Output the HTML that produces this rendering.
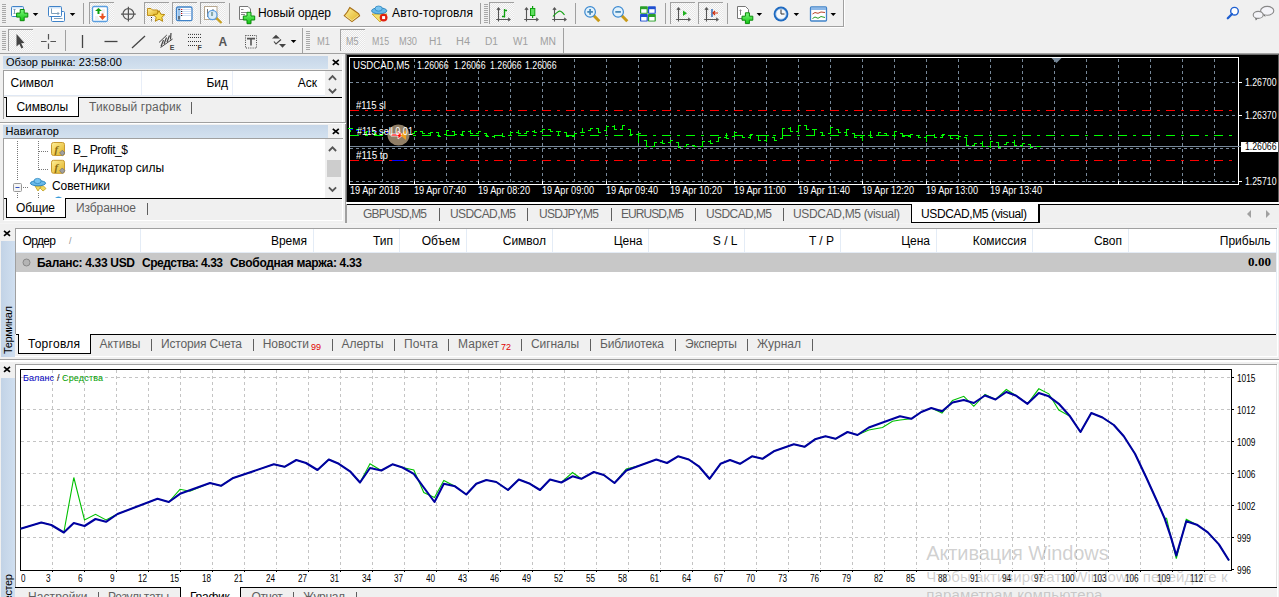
<!DOCTYPE html><html><head><meta charset="utf-8"><style>
html,body{margin:0;padding:0;width:1279px;height:597px;overflow:hidden;background:#f0f0f0;font-family:"Liberation Sans",sans-serif;}
.t{position:absolute;white-space:pre;line-height:1;}
svg{position:absolute;overflow:visible}
</style></head><body>
<div style="position:absolute;left:0px;top:26px;width:844px;height:1px;background:#a0a0a0"></div>
<div style="position:absolute;left:0px;top:27px;width:844px;height:1px;background:#ffffff"></div>
<div style="position:absolute;left:0px;top:53px;width:346px;height:1px;background:#a0a0a0"></div>
<div style="position:absolute;left:346px;top:53px;width:933px;height:1px;background:#a0a0a0"></div>
<div style="position:absolute;left:2px;top:4px;width:4px;height:1px;background:#a8a8a8"></div>
<div style="position:absolute;left:2px;top:6px;width:4px;height:1px;background:#a8a8a8"></div>
<div style="position:absolute;left:2px;top:8px;width:4px;height:1px;background:#a8a8a8"></div>
<div style="position:absolute;left:2px;top:10px;width:4px;height:1px;background:#a8a8a8"></div>
<div style="position:absolute;left:2px;top:12px;width:4px;height:1px;background:#a8a8a8"></div>
<div style="position:absolute;left:2px;top:14px;width:4px;height:1px;background:#a8a8a8"></div>
<div style="position:absolute;left:2px;top:16px;width:4px;height:1px;background:#a8a8a8"></div>
<div style="position:absolute;left:2px;top:18px;width:4px;height:1px;background:#a8a8a8"></div>
<div style="position:absolute;left:2px;top:20px;width:4px;height:1px;background:#a8a8a8"></div>
<div style="position:absolute;left:2px;top:22px;width:4px;height:1px;background:#a8a8a8"></div>
<div style="position:absolute;left:843px;top:0px;width:1px;height:26px;background:#a0a0a0"></div>
<div style="position:absolute;left:844px;top:0px;width:1px;height:26px;background:#ffffff"></div>
<div style="position:absolute;left:83px;top:3px;width:1px;height:21px;background:#a0a0a0"></div>
<div style="position:absolute;left:229px;top:3px;width:1px;height:21px;background:#a0a0a0"></div>
<div style="position:absolute;left:575px;top:3px;width:1px;height:21px;background:#a0a0a0"></div>
<div style="position:absolute;left:665px;top:3px;width:1px;height:21px;background:#a0a0a0"></div>
<div style="position:absolute;left:727px;top:3px;width:1px;height:21px;background:#a0a0a0"></div>
<div style="position:absolute;left:480px;top:3px;width:1px;height:21px;background:#a0a0a0"></div>
<div style="position:absolute;left:484px;top:4px;width:4px;height:1px;background:#a8a8a8"></div>
<div style="position:absolute;left:484px;top:6px;width:4px;height:1px;background:#a8a8a8"></div>
<div style="position:absolute;left:484px;top:8px;width:4px;height:1px;background:#a8a8a8"></div>
<div style="position:absolute;left:484px;top:10px;width:4px;height:1px;background:#a8a8a8"></div>
<div style="position:absolute;left:484px;top:12px;width:4px;height:1px;background:#a8a8a8"></div>
<div style="position:absolute;left:484px;top:14px;width:4px;height:1px;background:#a8a8a8"></div>
<div style="position:absolute;left:484px;top:16px;width:4px;height:1px;background:#a8a8a8"></div>
<div style="position:absolute;left:484px;top:18px;width:4px;height:1px;background:#a8a8a8"></div>
<div style="position:absolute;left:484px;top:20px;width:4px;height:1px;background:#a8a8a8"></div>
<div style="position:absolute;left:484px;top:22px;width:4px;height:1px;background:#a8a8a8"></div>
<div style="position:absolute;left:89px;top:2px;width:25px;height:22px;background:repeating-conic-gradient(#fbfbfb 0 25%,#e6e6e6 0 50%) 0 0/2px 2px;border-top:1px solid #a0a0a0;border-left:1px solid #a0a0a0;box-sizing:border-box"></div>
<div style="position:absolute;left:144px;top:2px;width:25px;height:22px;background:repeating-conic-gradient(#fbfbfb 0 25%,#e6e6e6 0 50%) 0 0/2px 2px;border-top:1px solid #a0a0a0;border-left:1px solid #a0a0a0;box-sizing:border-box"></div>
<div style="position:absolute;left:172px;top:2px;width:25px;height:22px;background:repeating-conic-gradient(#fbfbfb 0 25%,#e6e6e6 0 50%) 0 0/2px 2px;border-top:1px solid #a0a0a0;border-left:1px solid #a0a0a0;box-sizing:border-box"></div>
<div style="position:absolute;left:200px;top:2px;width:25px;height:22px;background:repeating-conic-gradient(#fbfbfb 0 25%,#e6e6e6 0 50%) 0 0/2px 2px;border-top:1px solid #a0a0a0;border-left:1px solid #a0a0a0;box-sizing:border-box"></div>
<div style="position:absolute;left:489px;top:2px;width:25px;height:22px;background:repeating-conic-gradient(#fbfbfb 0 25%,#e6e6e6 0 50%) 0 0/2px 2px;border-top:1px solid #a0a0a0;border-left:1px solid #a0a0a0;box-sizing:border-box"></div>
<div style="position:absolute;left:670px;top:2px;width:25px;height:22px;background:repeating-conic-gradient(#fbfbfb 0 25%,#e6e6e6 0 50%) 0 0/2px 2px;border-top:1px solid #a0a0a0;border-left:1px solid #a0a0a0;box-sizing:border-box"></div>
<div style="position:absolute;left:698px;top:2px;width:25px;height:22px;background:repeating-conic-gradient(#fbfbfb 0 25%,#e6e6e6 0 50%) 0 0/2px 2px;border-top:1px solid #a0a0a0;border-left:1px solid #a0a0a0;box-sizing:border-box"></div>
<div class="t" style="left:258.00px;top:7.14px;font-size:12px;color:#000;font-family:'Liberation Sans',sans-serif;letter-spacing:-0.078px;">Новый ордер</div>
<div class="t" style="left:392.00px;top:7.14px;font-size:12px;color:#000;font-family:'Liberation Sans',sans-serif;letter-spacing:0.148px;">Авто-торговля</div>
<div style="position:absolute;left:2px;top:31px;width:4px;height:1px;background:#a8a8a8"></div>
<div style="position:absolute;left:2px;top:33px;width:4px;height:1px;background:#a8a8a8"></div>
<div style="position:absolute;left:2px;top:35px;width:4px;height:1px;background:#a8a8a8"></div>
<div style="position:absolute;left:2px;top:37px;width:4px;height:1px;background:#a8a8a8"></div>
<div style="position:absolute;left:2px;top:39px;width:4px;height:1px;background:#a8a8a8"></div>
<div style="position:absolute;left:2px;top:41px;width:4px;height:1px;background:#a8a8a8"></div>
<div style="position:absolute;left:2px;top:43px;width:4px;height:1px;background:#a8a8a8"></div>
<div style="position:absolute;left:2px;top:45px;width:4px;height:1px;background:#a8a8a8"></div>
<div style="position:absolute;left:2px;top:47px;width:4px;height:1px;background:#a8a8a8"></div>
<div style="position:absolute;left:2px;top:49px;width:4px;height:1px;background:#a8a8a8"></div>
<div style="position:absolute;left:8px;top:29px;width:25px;height:22px;background:repeating-conic-gradient(#fbfbfb 0 25%,#e6e6e6 0 50%) 0 0/2px 2px;border-top:1px solid #a0a0a0;border-left:1px solid #a0a0a0;box-sizing:border-box"></div>
<div style="position:absolute;left:65px;top:30px;width:1px;height:21px;background:#a0a0a0"></div>
<div style="position:absolute;left:302px;top:28px;width:1px;height:25px;background:#a0a0a0"></div>
<div style="position:absolute;left:306px;top:31px;width:4px;height:1px;background:#a8a8a8"></div>
<div style="position:absolute;left:306px;top:33px;width:4px;height:1px;background:#a8a8a8"></div>
<div style="position:absolute;left:306px;top:35px;width:4px;height:1px;background:#a8a8a8"></div>
<div style="position:absolute;left:306px;top:37px;width:4px;height:1px;background:#a8a8a8"></div>
<div style="position:absolute;left:306px;top:39px;width:4px;height:1px;background:#a8a8a8"></div>
<div style="position:absolute;left:306px;top:41px;width:4px;height:1px;background:#a8a8a8"></div>
<div style="position:absolute;left:306px;top:43px;width:4px;height:1px;background:#a8a8a8"></div>
<div style="position:absolute;left:306px;top:45px;width:4px;height:1px;background:#a8a8a8"></div>
<div style="position:absolute;left:306px;top:47px;width:4px;height:1px;background:#a8a8a8"></div>
<div style="position:absolute;left:306px;top:49px;width:4px;height:1px;background:#a8a8a8"></div>
<div style="position:absolute;left:340px;top:29px;width:25px;height:22px;background:repeating-conic-gradient(#fbfbfb 0 25%,#e6e6e6 0 50%) 0 0/2px 2px;border-top:1px solid #a0a0a0;border-left:1px solid #a0a0a0;box-sizing:border-box"></div>
<div style="position:absolute;left:563px;top:28px;width:1px;height:25px;background:#a0a0a0"></div>
<div class="t" style="left:317.00px;top:36.53px;font-size:10px;color:#a0a0a0;font-family:'Liberation Sans',sans-serif;transform-origin:0 0;transform:scaleX(0.9359);">M1</div>
<div class="t" style="left:345.50px;top:36.53px;font-size:10px;color:#a0a0a0;font-family:'Liberation Sans',sans-serif;transform-origin:0 0;transform:scaleX(0.8999);">M5</div>
<div class="t" style="left:371.50px;top:36.53px;font-size:10px;color:#a0a0a0;font-family:'Liberation Sans',sans-serif;transform-origin:0 0;transform:scaleX(0.8790);">M15</div>
<div class="t" style="left:399.00px;top:36.53px;font-size:10px;color:#a0a0a0;font-family:'Liberation Sans',sans-serif;transform-origin:0 0;transform:scaleX(0.9253);">M30</div>
<div class="t" style="left:429.00px;top:36.53px;font-size:10px;color:#a0a0a0;font-family:'Liberation Sans',sans-serif;transform-origin:0 0;transform:scaleX(1.0171);">H1</div>
<div class="t" style="left:456.00px;top:36.53px;font-size:10px;color:#a0a0a0;font-family:'Liberation Sans',sans-serif;transform-origin:0 0;transform:scaleX(1.0954);">H4</div>
<div class="t" style="left:485.00px;top:36.53px;font-size:10px;color:#a0a0a0;font-family:'Liberation Sans',sans-serif;transform-origin:0 0;transform:scaleX(1.0171);">D1</div>
<div class="t" style="left:513.00px;top:36.53px;font-size:10px;color:#a0a0a0;font-family:'Liberation Sans',sans-serif;transform-origin:0 0;transform:scaleX(1.0000);">W1</div>
<div class="t" style="left:540.00px;top:36.53px;font-size:10px;color:#a0a0a0;font-family:'Liberation Sans',sans-serif;transform-origin:0 0;transform:scaleX(1.0291);">MN</div>
<div style="position:absolute;left:3px;top:56px;width:325px;height:13px;background:linear-gradient(#c6d6e8,#d3e1ef)"></div>
<div class="t" style="left:6.00px;top:57.39px;font-size:11px;color:#000;font-family:'Liberation Sans',sans-serif;letter-spacing:0.043px;">Обзор рынка: 23:58:00</div>
<div style="position:absolute;left:3px;top:70px;width:340px;height:1px;background:#a0a0a0"></div>
<div style="position:absolute;left:4px;top:71px;width:321px;height:24px;background:#fff"></div>
<div style="position:absolute;left:4px;top:95px;width:321px;height:1px;background:#e0e8f4"></div>
<div style="position:absolute;left:141px;top:71px;width:1px;height:24px;background:#e8eef8"></div>
<div style="position:absolute;left:232px;top:71px;width:1px;height:24px;background:#e8eef8"></div>
<div class="t" style="left:10.60px;top:77.44px;font-size:12px;color:#000;font-family:'Liberation Sans',sans-serif;letter-spacing:-0.073px;">Символ</div>
<div class="t" style="left:206.42px;top:77.44px;font-size:12px;color:#000;font-family:'Liberation Sans',sans-serif;">Бид</div>
<div class="t" style="left:297.75px;top:77.44px;font-size:12px;color:#000;font-family:'Liberation Sans',sans-serif;">Аск</div>
<div style="position:absolute;left:325px;top:71px;width:17px;height:24px;background:#f0f0f0"></div>
<div style="position:absolute;left:78px;top:97px;width:264px;height:1px;background:#000"></div>
<div style="position:absolute;left:6px;top:97px;width:73px;height:20px;background:#fff;border-left:1px solid #000;border-right:1px solid #000;border-bottom:1px solid #000;box-sizing:border-box"></div>
<div style="position:absolute;left:4px;top:97px;width:3px;height:1px;background:#000"></div>
<div style="position:absolute;left:3px;top:71px;width:1px;height:48px;background:#a0a0a0"></div>
<div class="t" style="left:16.50px;top:100.74px;font-size:12px;color:#000;font-family:'Liberation Sans',sans-serif;letter-spacing:-0.065px;">Символы</div>
<div class="t" style="left:89.00px;top:100.74px;font-size:12px;color:#5f5f5f;font-family:'Liberation Sans',sans-serif;letter-spacing:0.143px;">Тиковый график</div>
<div style="position:absolute;left:191px;top:102px;width:1px;height:12px;background:#5f5f5f"></div>
<div style="position:absolute;left:342px;top:56px;width:1px;height:165px;background:#ffffff"></div>
<div style="position:absolute;left:4px;top:220px;width:339px;height:1px;background:#ffffff"></div>
<div style="position:absolute;left:345px;top:54px;width:1px;height:169px;background:#a0a0a0"></div>
<div style="position:absolute;left:0px;top:122px;width:346px;height:1px;background:#a0a0a0"></div>
<div style="position:absolute;left:0px;top:123px;width:346px;height:1px;background:#ffffff"></div>
<div style="position:absolute;left:3px;top:125px;width:325px;height:13px;background:linear-gradient(#c6d6e8,#d3e1ef)"></div>
<div class="t" style="left:5.50px;top:125.69px;font-size:11px;color:#000;font-family:'Liberation Sans',sans-serif;letter-spacing:0.078px;">Навигатор</div>
<div style="position:absolute;left:3px;top:138px;width:340px;height:1px;background:#a0a0a0"></div>
<div style="position:absolute;left:4px;top:139px;width:321px;height:59px;background:#fff"></div>
<div style="position:absolute;left:325px;top:139px;width:17px;height:59px;background:#f0f0f0"></div>
<div style="position:absolute;left:327px;top:160px;width:14px;height:17px;background:#cdcdcd"></div>
<div class="t" style="left:73.00px;top:143.84px;font-size:12px;color:#000;font-family:'Liberation Sans',sans-serif;letter-spacing:-0.434px;">B_ Profit_$</div>
<div class="t" style="left:73.00px;top:161.84px;font-size:12px;color:#000;font-family:'Liberation Sans',sans-serif;letter-spacing:-0.018px;">Индикатор силы</div>
<div class="t" style="left:52.00px;top:179.84px;font-size:12px;color:#000;font-family:'Liberation Sans',sans-serif;letter-spacing:-0.080px;">Советники</div>
<div style="position:absolute;left:65px;top:198px;width:277px;height:1px;background:#000"></div>
<div style="position:absolute;left:6px;top:198px;width:60px;height:20px;background:#fff;border-left:1px solid #000;border-right:1px solid #000;border-bottom:1px solid #000;box-sizing:border-box"></div>
<div style="position:absolute;left:4px;top:198px;width:3px;height:1px;background:#000"></div>
<div style="position:absolute;left:3px;top:139px;width:1px;height:81px;background:#a0a0a0"></div>
<div class="t" style="left:16.00px;top:201.84px;font-size:12px;color:#000;font-family:'Liberation Sans',sans-serif;letter-spacing:-0.113px;">Общие</div>
<div class="t" style="left:76.00px;top:201.84px;font-size:12px;color:#5f5f5f;font-family:'Liberation Sans',sans-serif;letter-spacing:-0.100px;">Избранное</div>
<div style="position:absolute;left:147px;top:203px;width:1px;height:12px;background:#5f5f5f"></div>
<div style="position:absolute;left:0px;top:223px;width:346px;height:1px;background:#a0a0a0"></div>
<div style="position:absolute;left:0px;top:223px;width:1279px;height:1px;background:#f4f4f4"></div>
<div style="position:absolute;left:346px;top:53px;width:933px;height:2px;background:linear-gradient(#c0c0c0,#505050)"></div>
<div style="position:absolute;left:347px;top:55px;width:932px;height:147px;background:#000"></div>
<div style="position:absolute;left:346px;top:55px;width:1px;height:147px;background:#707070"></div>
<div style="position:absolute;left:346px;top:202px;width:933px;height:1px;background:#ffffff"></div>
<div style="position:absolute;left:346px;top:203px;width:933px;height:1px;background:#ffffff"></div>
<div style="position:absolute;left:346px;top:204px;width:933px;height:1px;background:#000"></div>
<svg style="left:0;top:0" width="1279" height="597" shape-rendering="crispEdges"><line x1="382.5" y1="59" x2="382.5" y2="184" stroke="#778899" stroke-dasharray="3,3"/><line x1="414.5" y1="59" x2="414.5" y2="184" stroke="#778899" stroke-dasharray="3,3"/><line x1="446.5" y1="59" x2="446.5" y2="184" stroke="#778899" stroke-dasharray="3,3"/><line x1="478.5" y1="59" x2="478.5" y2="184" stroke="#778899" stroke-dasharray="3,3"/><line x1="510.5" y1="59" x2="510.5" y2="184" stroke="#778899" stroke-dasharray="3,3"/><line x1="542.5" y1="59" x2="542.5" y2="184" stroke="#778899" stroke-dasharray="3,3"/><line x1="574.5" y1="59" x2="574.5" y2="184" stroke="#778899" stroke-dasharray="3,3"/><line x1="606.5" y1="59" x2="606.5" y2="184" stroke="#778899" stroke-dasharray="3,3"/><line x1="638.5" y1="59" x2="638.5" y2="184" stroke="#778899" stroke-dasharray="3,3"/><line x1="670.5" y1="59" x2="670.5" y2="184" stroke="#778899" stroke-dasharray="3,3"/><line x1="702.5" y1="59" x2="702.5" y2="184" stroke="#778899" stroke-dasharray="3,3"/><line x1="734.5" y1="59" x2="734.5" y2="184" stroke="#778899" stroke-dasharray="3,3"/><line x1="766.5" y1="59" x2="766.5" y2="184" stroke="#778899" stroke-dasharray="3,3"/><line x1="798.5" y1="59" x2="798.5" y2="184" stroke="#778899" stroke-dasharray="3,3"/><line x1="830.5" y1="59" x2="830.5" y2="184" stroke="#778899" stroke-dasharray="3,3"/><line x1="862.5" y1="59" x2="862.5" y2="184" stroke="#778899" stroke-dasharray="3,3"/><line x1="894.5" y1="59" x2="894.5" y2="184" stroke="#778899" stroke-dasharray="3,3"/><line x1="926.5" y1="59" x2="926.5" y2="184" stroke="#778899" stroke-dasharray="3,3"/><line x1="958.5" y1="59" x2="958.5" y2="184" stroke="#778899" stroke-dasharray="3,3"/><line x1="990.5" y1="59" x2="990.5" y2="184" stroke="#778899" stroke-dasharray="3,3"/><line x1="1022.5" y1="59" x2="1022.5" y2="184" stroke="#778899" stroke-dasharray="3,3"/><line x1="1054.5" y1="59" x2="1054.5" y2="184" stroke="#778899" stroke-dasharray="3,3"/><line x1="1086.5" y1="59" x2="1086.5" y2="184" stroke="#778899" stroke-dasharray="3,3"/><line x1="1118.5" y1="59" x2="1118.5" y2="184" stroke="#778899" stroke-dasharray="3,3"/><line x1="1150.5" y1="59" x2="1150.5" y2="184" stroke="#778899" stroke-dasharray="3,3"/><line x1="1182.5" y1="59" x2="1182.5" y2="184" stroke="#778899" stroke-dasharray="3,3"/><line x1="1214.5" y1="59" x2="1214.5" y2="184" stroke="#778899" stroke-dasharray="3,3"/><line x1="350" y1="82.5" x2="1238" y2="82.5" stroke="#778899" stroke-dasharray="3,3"/><line x1="350" y1="115.5" x2="1238" y2="115.5" stroke="#778899" stroke-dasharray="3,3"/><line x1="350" y1="148.5" x2="1238" y2="148.5" stroke="#778899" stroke-dasharray="3,3"/><line x1="350" y1="181.5" x2="1238" y2="181.5" stroke="#778899" stroke-dasharray="3,3"/><rect x="349.5" y="57.5" width="889" height="127" fill="none" stroke="#fff"/><line x1="414.5" y1="181" x2="414.5" y2="184" stroke="#fff"/><line x1="478.5" y1="181" x2="478.5" y2="184" stroke="#fff"/><line x1="542.5" y1="181" x2="542.5" y2="184" stroke="#fff"/><line x1="606.5" y1="181" x2="606.5" y2="184" stroke="#fff"/><line x1="670.5" y1="181" x2="670.5" y2="184" stroke="#fff"/><line x1="734.5" y1="181" x2="734.5" y2="184" stroke="#fff"/><line x1="798.5" y1="181" x2="798.5" y2="184" stroke="#fff"/><line x1="862.5" y1="181" x2="862.5" y2="184" stroke="#fff"/><line x1="926.5" y1="181" x2="926.5" y2="184" stroke="#fff"/><line x1="990.5" y1="181" x2="990.5" y2="184" stroke="#fff"/><line x1="1054.5" y1="181" x2="1054.5" y2="184" stroke="#fff"/><line x1="1118.5" y1="181" x2="1118.5" y2="184" stroke="#fff"/><line x1="1182.5" y1="181" x2="1182.5" y2="184" stroke="#fff"/><line x1="1239" y1="82.5" x2="1242" y2="82.5" stroke="#fff"/><line x1="1239" y1="115.5" x2="1242" y2="115.5" stroke="#fff"/><line x1="1239" y1="181.5" x2="1242" y2="181.5" stroke="#fff"/><line x1="350" y1="110.5" x2="1236" y2="110.5" stroke="#f00" stroke-dasharray="9,6,3,6"/><line x1="350" y1="160.5" x2="1236" y2="160.5" stroke="#f00" stroke-dasharray="9,6,3,6"/><line x1="350" y1="135.5" x2="1236" y2="135.5" stroke="#00ff00" stroke-dasharray="9,6,3,6"/><line x1="350" y1="146.5" x2="1242" y2="146.5" stroke="#778899"/><path d="M350.5,128V132M348,128.5H350.5M350.5,128.5H353M358.5,129V133M356,129.5H358.5M358.5,132.5H361M366.5,131V135M364,132.5H366.5M366.5,131.5H369M374.5,131V135M372,131.5H374.5M374.5,134.5H377M382.5,132V136M380,134.5H382.5M382.5,132.5H385M390.5,133V136M388,133.5H390.5M390.5,135.5H393M398.5,133V136M396,135.5H398.5M398.5,133.5H401M406.5,132V135M404,133.5H406.5M406.5,134.5H409M414.5,131V134M412,133.5H414.5M414.5,131.5H417M422.5,131V134M420,131.5H422.5M422.5,133.5H425M430.5,132V135M428,133.5H430.5M430.5,132.5H433M438.5,132V137M436,132.5H438.5M438.5,136.5H441M446.5,130V135M444,134.5H446.5M446.5,130.5H449M454.5,131V135M452,131.5H454.5M454.5,134.5H457M462.5,131V135M460,134.5H462.5M462.5,131.5H465M470.5,130V134M468,131.5H470.5M470.5,133.5H473M478.5,131V134M476,133.5H478.5M478.5,131.5H481M486.5,133V137M484,133.5H486.5M486.5,136.5H489M494.5,135V138M492,136.5H494.5M494.5,135.5H497M502.5,133V137M500,135.5H502.5M502.5,136.5H505M510.5,132V136M508,135.5H510.5M510.5,132.5H513M518.5,130V134M516,132.5H518.5M518.5,133.5H521M526.5,131V134M524,133.5H526.5M526.5,131.5H529M534.5,130V133M532,131.5H534.5M534.5,132.5H537M542.5,129V132M540,131.5H542.5M542.5,129.5H545M550.5,129V132M548,129.5H550.5M550.5,131.5H553M558.5,131V136M556,131.5H558.5M558.5,131.5H561M566.5,132V137M564,132.5H566.5M566.5,136.5H569M574.5,133V137M572,136.5H574.5M574.5,133.5H577M582.5,128V133M580,132.5H582.5M582.5,132.5H585M590.5,128V131M588,130.5H590.5M590.5,128.5H593M598.5,128V133M596,128.5H598.5M598.5,132.5H601M606.5,126V131M604,130.5H606.5M606.5,126.5H609M614.5,125V130M612,126.5H614.5M614.5,129.5H617M622.5,125V130M620,129.5H622.5M622.5,125.5H625M630.5,129V135M628,129.5H630.5M630.5,134.5H633M638.5,133V143M636,134.5H638.5M638.5,133.5H641M646.5,140V147M644,140.5H646.5M646.5,146.5H649M654.5,142V147M652,146.5H654.5M654.5,142.5H657M662.5,140V144M660,142.5H662.5M662.5,143.5H665M670.5,140V143M668,142.5H670.5M670.5,140.5H673M678.5,142V148M676,142.5H678.5M678.5,147.5H681M686.5,144V147M684,146.5H686.5M686.5,144.5H689M694.5,145V147M692,145.5H694.5M694.5,146.5H697M702.5,141V147M700,146.5H702.5M702.5,141.5H705M710.5,140V144M708,141.5H710.5M710.5,143.5H713M718.5,137V142M716,141.5H718.5M718.5,137.5H721M726.5,133V139M724,137.5H726.5M726.5,138.5H729M734.5,132V137M732,136.5H734.5M734.5,132.5H737M742.5,135V138M740,135.5H742.5M742.5,137.5H745M750.5,134V139M748,137.5H750.5M750.5,134.5H753M758.5,135V141M756,135.5H758.5M758.5,140.5H761M766.5,135V142M764,140.5H766.5M766.5,135.5H769M774.5,137V141M772,137.5H774.5M774.5,140.5H777M782.5,128V139M780,138.5H782.5M782.5,128.5H785M790.5,127V132M788,128.5H790.5M790.5,131.5H793M798.5,125V132M796,131.5H798.5M798.5,125.5H801M806.5,125V130M804,125.5H806.5M806.5,129.5H809M814.5,129V136M812,129.5H814.5M814.5,129.5H817M822.5,132V136M820,132.5H822.5M822.5,135.5H825M830.5,127V134M828,133.5H830.5M830.5,127.5H833M838.5,129V133M836,129.5H838.5M838.5,132.5H841M846.5,129V136M844,132.5H846.5M846.5,129.5H849M854.5,133V138M852,133.5H854.5M854.5,137.5H857M862.5,135V141M860,137.5H862.5M862.5,135.5H865M870.5,131V138M868,135.5H870.5M870.5,137.5H873M878.5,132V136M876,135.5H878.5M878.5,132.5H881M886.5,133V136M884,133.5H886.5M886.5,135.5H889M894.5,131V138M892,135.5H894.5M894.5,131.5H897M902.5,133V137M900,133.5H902.5M902.5,136.5H905M910.5,134V138M908,136.5H910.5M910.5,134.5H913M918.5,135V138M916,135.5H918.5M918.5,137.5H921M926.5,135V142M924,137.5H926.5M926.5,135.5H929M934.5,134V138M932,135.5H934.5M934.5,137.5H937M942.5,134V138M940,137.5H942.5M942.5,134.5H945M950.5,135V139M948,135.5H950.5M950.5,138.5H953M958.5,136V140M956,138.5H958.5M958.5,136.5H961M966.5,137V146M964,137.5H966.5M966.5,145.5H969M974.5,143V146M972,145.5H974.5M974.5,143.5H977M982.5,141V147M980,143.5H982.5M982.5,146.5H985M990.5,141V148M988,146.5H990.5M990.5,141.5H993M998.5,142V148M996,142.5H998.5M998.5,147.5H1001M1006.5,142V145M1004,144.5H1006.5M1006.5,142.5H1009M1014.5,140V146M1012,142.5H1014.5M1014.5,145.5H1017M1022.5,143V147M1020,145.5H1022.5M1022.5,143.5H1025M1030.5,144V148M1028,144.5H1030.5M1030.5,147.5H1033M1036,146.5H1041" stroke="#00ff00" fill="none"/><line x1="350" y1="129.5" x2="398" y2="133.5" stroke="#0000ff" stroke-dasharray="3,3"/><line x1="392" y1="160.5" x2="404" y2="160.5" stroke="#0000ff"/><path d="M1051.5,58H1061.5L1056.5,63Z" fill="#778899" shape-rendering="auto"/></svg>
<svg style="left:386px;top:123px" width="26" height="24"><ellipse cx="12.5" cy="12" rx="11" ry="10.5" fill="#a08c70" opacity="0.9"/><path d="M5,11H12V8L17,12L12,16V13H5Z" fill="#ff0000" stroke="#fff" stroke-width="0.8"/><path d="M20,7V17L14,12Z" fill="#f0a020"/></svg>
<div class="t" style="left:353.40px;top:61.23px;font-size:10px;color:#fff;font-family:'Liberation Sans',sans-serif;transform-origin:0 0;transform:scaleX(0.9611);">USDCAD,M5</div>
<div class="t" style="left:417.30px;top:61.23px;font-size:10px;color:#fff;font-family:'Liberation Sans',sans-serif;transform-origin:0 0;transform:scaleX(0.8740);">1.26066</div>
<div class="t" style="left:453.50px;top:61.23px;font-size:10px;color:#fff;font-family:'Liberation Sans',sans-serif;transform-origin:0 0;transform:scaleX(0.8740);">1.26066</div>
<div class="t" style="left:489.70px;top:61.23px;font-size:10px;color:#fff;font-family:'Liberation Sans',sans-serif;transform-origin:0 0;transform:scaleX(0.8740);">1.26066</div>
<div class="t" style="left:525.40px;top:61.23px;font-size:10px;color:#fff;font-family:'Liberation Sans',sans-serif;transform-origin:0 0;transform:scaleX(0.8740);">1.26066</div>
<div class="t" style="left:356.00px;top:100.53px;font-size:10px;color:#fff;font-family:'Liberation Sans',sans-serif;transform-origin:0 0;transform:scaleX(0.9519);">#115 sl</div>
<div class="t" style="left:357.00px;top:126.53px;font-size:10px;color:#fff;font-family:'Liberation Sans',sans-serif;transform-origin:0 0;transform:scaleX(0.9099);">#115 sell 0.01</div>
<div class="t" style="left:356.00px;top:150.53px;font-size:10px;color:#fff;font-family:'Liberation Sans',sans-serif;transform-origin:0 0;transform:scaleX(0.9804);">#115 tp</div>
<div class="t" style="left:349.50px;top:185.53px;font-size:10px;color:#fff;font-family:'Liberation Sans',sans-serif;transform-origin:0 0;transform:scaleX(0.9175);">19 Apr 2018</div>
<div class="t" style="left:414.00px;top:185.53px;font-size:10px;color:#fff;font-family:'Liberation Sans',sans-serif;transform-origin:0 0;transform:scaleX(0.9166);">19 Apr 07:40</div>
<div class="t" style="left:478.00px;top:185.53px;font-size:10px;color:#fff;font-family:'Liberation Sans',sans-serif;transform-origin:0 0;transform:scaleX(0.9166);">19 Apr 08:20</div>
<div class="t" style="left:542.00px;top:185.53px;font-size:10px;color:#fff;font-family:'Liberation Sans',sans-serif;transform-origin:0 0;transform:scaleX(0.9166);">19 Apr 09:00</div>
<div class="t" style="left:606.00px;top:185.53px;font-size:10px;color:#fff;font-family:'Liberation Sans',sans-serif;transform-origin:0 0;transform:scaleX(0.9166);">19 Apr 09:40</div>
<div class="t" style="left:670.00px;top:185.53px;font-size:10px;color:#fff;font-family:'Liberation Sans',sans-serif;transform-origin:0 0;transform:scaleX(0.9166);">19 Apr 10:20</div>
<div class="t" style="left:734.00px;top:185.53px;font-size:10px;color:#fff;font-family:'Liberation Sans',sans-serif;transform-origin:0 0;transform:scaleX(0.9286);">19 Apr 11:00</div>
<div class="t" style="left:798.00px;top:185.53px;font-size:10px;color:#fff;font-family:'Liberation Sans',sans-serif;transform-origin:0 0;transform:scaleX(0.9286);">19 Apr 11:40</div>
<div class="t" style="left:862.00px;top:185.53px;font-size:10px;color:#fff;font-family:'Liberation Sans',sans-serif;transform-origin:0 0;transform:scaleX(0.9166);">19 Apr 12:20</div>
<div class="t" style="left:926.00px;top:185.53px;font-size:10px;color:#fff;font-family:'Liberation Sans',sans-serif;transform-origin:0 0;transform:scaleX(0.9166);">19 Apr 13:00</div>
<div class="t" style="left:990.00px;top:185.53px;font-size:10px;color:#fff;font-family:'Liberation Sans',sans-serif;transform-origin:0 0;transform:scaleX(0.9166);">19 Apr 13:40</div>
<div class="t" style="left:1244.50px;top:77.53px;font-size:10px;color:#fff;font-family:'Liberation Sans',sans-serif;transform-origin:0 0;transform:scaleX(0.8712);">1.26700</div>
<div class="t" style="left:1244.50px;top:110.53px;font-size:10px;color:#fff;font-family:'Liberation Sans',sans-serif;transform-origin:0 0;transform:scaleX(0.8712);">1.26370</div>
<div class="t" style="left:1244.50px;top:176.53px;font-size:10px;color:#fff;font-family:'Liberation Sans',sans-serif;transform-origin:0 0;transform:scaleX(0.8712);">1.25710</div>
<div style="position:absolute;left:1241px;top:142px;width:37px;height:10px;background:#fff"></div>
<div class="t" style="left:1244.50px;top:141.53px;font-size:10px;color:#000;font-family:'Liberation Sans',sans-serif;transform-origin:0 0;transform:scaleX(0.8712);">1.26066</div>
<div style="position:absolute;left:1278px;top:54px;width:1px;height:148px;background:#5f5f5f"></div>
<div class="t" style="left:363.00px;top:207.84px;font-size:12px;color:#5f5f5f;font-family:'Liberation Sans',sans-serif;letter-spacing:-0.834px;">GBPUSD,M5</div>
<div class="t" style="left:450.00px;top:207.84px;font-size:12px;color:#5f5f5f;font-family:'Liberation Sans',sans-serif;letter-spacing:-0.586px;">USDCAD,M5</div>
<div class="t" style="left:539.00px;top:207.84px;font-size:12px;color:#5f5f5f;font-family:'Liberation Sans',sans-serif;letter-spacing:-0.725px;">USDJPY,M5</div>
<div class="t" style="left:621.00px;top:207.84px;font-size:12px;color:#5f5f5f;font-family:'Liberation Sans',sans-serif;letter-spacing:-0.961px;">EURUSD,M5</div>
<div class="t" style="left:706.00px;top:207.84px;font-size:12px;color:#5f5f5f;font-family:'Liberation Sans',sans-serif;letter-spacing:-0.586px;">USDCAD,M5</div>
<div class="t" style="left:793.00px;top:207.84px;font-size:12px;color:#5f5f5f;font-family:'Liberation Sans',sans-serif;letter-spacing:-0.335px;">USDCAD,M5 (visual)</div>
<div style="position:absolute;left:439px;top:208px;width:1px;height:13px;background:#5f5f5f"></div>
<div style="position:absolute;left:527px;top:208px;width:1px;height:13px;background:#5f5f5f"></div>
<div style="position:absolute;left:611px;top:208px;width:1px;height:13px;background:#5f5f5f"></div>
<div style="position:absolute;left:695px;top:208px;width:1px;height:13px;background:#5f5f5f"></div>
<div style="position:absolute;left:783px;top:208px;width:1px;height:13px;background:#5f5f5f"></div>
<div style="position:absolute;left:911px;top:204px;width:129px;height:19px;background:#fff;border-left:1px solid #000;border-right:2px solid #000;border-bottom:1px solid #000;box-sizing:border-box"></div>
<div class="t" style="left:921.00px;top:207.84px;font-size:12px;color:#000;font-family:'Liberation Sans',sans-serif;letter-spacing:-0.394px;">USDCAD,M5 (visual)</div>
<div style="position:absolute;left:346px;top:204px;width:1px;height:19px;background:#a0a0a0"></div>
<svg style="left:1245px;top:208px" width="30" height="12"><path d="M6,2L2,6L6,10Z" fill="#a0a0a0"/><path d="M21,2L25,6L21,10Z" fill="#a0a0a0"/></svg>
<div style="position:absolute;left:15px;top:228px;width:1262px;height:106px;background:#fff"></div>
<div style="position:absolute;left:15px;top:228px;width:1262px;height:1px;background:#a0a0a0"></div>
<div style="position:absolute;left:15px;top:228px;width:1px;height:106px;background:#a0a0a0"></div>
<div style="position:absolute;left:16px;top:252px;width:1260px;height:1px;background:#e4ecf6"></div>
<div style="position:absolute;left:140px;top:229px;width:1px;height:23px;background:#e4ecf6"></div>
<div style="position:absolute;left:313px;top:229px;width:1px;height:23px;background:#e4ecf6"></div>
<div style="position:absolute;left:399px;top:229px;width:1px;height:23px;background:#e4ecf6"></div>
<div style="position:absolute;left:466px;top:229px;width:1px;height:23px;background:#e4ecf6"></div>
<div style="position:absolute;left:552px;top:229px;width:1px;height:23px;background:#e4ecf6"></div>
<div style="position:absolute;left:648px;top:229px;width:1px;height:23px;background:#e4ecf6"></div>
<div style="position:absolute;left:744px;top:229px;width:1px;height:23px;background:#e4ecf6"></div>
<div style="position:absolute;left:840px;top:229px;width:1px;height:23px;background:#e4ecf6"></div>
<div style="position:absolute;left:936px;top:229px;width:1px;height:23px;background:#e4ecf6"></div>
<div style="position:absolute;left:1032px;top:229px;width:1px;height:23px;background:#e4ecf6"></div>
<div style="position:absolute;left:1128px;top:229px;width:1px;height:23px;background:#e4ecf6"></div>
<div style="position:absolute;left:1276px;top:229px;width:1px;height:105px;background:#e4ecf6"></div>
<div class="t" style="left:22.50px;top:234.84px;font-size:12px;color:#000;font-family:'Liberation Sans',sans-serif;letter-spacing:-0.641px;">Ордер</div>
<div class="t" style="left:69.00px;top:237.38px;font-size:9px;color:#909090;font-family:'Liberation Sans',sans-serif;">/</div>
<div class="t" style="left:270.91px;top:234.84px;font-size:12px;color:#000;font-family:'Liberation Sans',sans-serif;">Время</div>
<div class="t" style="left:373.00px;top:234.84px;font-size:12px;color:#000;font-family:'Liberation Sans',sans-serif;">Тип</div>
<div class="t" style="left:421.77px;top:234.84px;font-size:12px;color:#000;font-family:'Liberation Sans',sans-serif;">Объем</div>
<div class="t" style="left:502.73px;top:234.84px;font-size:12px;color:#000;font-family:'Liberation Sans',sans-serif;">Символ</div>
<div class="t" style="left:613.66px;top:234.84px;font-size:12px;color:#000;font-family:'Liberation Sans',sans-serif;">Цена</div>
<div class="t" style="left:712.84px;top:234.84px;font-size:12px;color:#000;font-family:'Liberation Sans',sans-serif;">S / L</div>
<div class="t" style="left:808.91px;top:234.84px;font-size:12px;color:#000;font-family:'Liberation Sans',sans-serif;">T / P</div>
<div class="t" style="left:901.16px;top:234.84px;font-size:12px;color:#000;font-family:'Liberation Sans',sans-serif;">Цена</div>
<div class="t" style="left:972.69px;top:234.84px;font-size:12px;color:#000;font-family:'Liberation Sans',sans-serif;">Комиссия</div>
<div class="t" style="left:1093.92px;top:234.84px;font-size:12px;color:#000;font-family:'Liberation Sans',sans-serif;">Своп</div>
<div class="t" style="left:1219.75px;top:234.84px;font-size:12px;color:#000;font-family:'Liberation Sans',sans-serif;">Прибыль</div>
<div style="position:absolute;left:16px;top:253px;width:1260px;height:19px;background:#c8c8c8"></div>
<svg style="left:22px;top:258px" width="10" height="10"><circle cx="4.5" cy="4.5" r="3.5" fill="#b4b4b4" stroke="#888" stroke-width="1"/></svg>
<div class="t" style="left:37.00px;top:256.54px;font-size:12px;color:#000;font-family:'Liberation Sans',sans-serif;font-weight:bold;letter-spacing:-0.324px;">Баланс: 4.33 USD</div>
<div class="t" style="left:142.00px;top:256.54px;font-size:12px;color:#000;font-family:'Liberation Sans',sans-serif;font-weight:bold;letter-spacing:-0.481px;">Средства: 4.33</div>
<div class="t" style="left:230.00px;top:256.54px;font-size:12px;color:#000;font-family:'Liberation Sans',sans-serif;font-weight:bold;letter-spacing:-0.312px;">Свободная маржа: 4.33</div>
<div class="t" style="left:1248.00px;top:255.12px;font-size:13px;color:#000;font-family:'Liberation Serif',serif;font-weight:bold;letter-spacing:0.083px;">0.00</div>
<div style="position:absolute;left:0px;top:229px;width:15px;height:12px;"></div>
<div style="position:absolute;left:1px;top:241px;width:14px;height:116px;background:linear-gradient(90deg,#c2d3e6,#d0dff0)"></div>
<div class="t" style="left:3.4px;top:353.7px;font-size:11px;letter-spacing:-0.39px;transform-origin:0 0;transform:rotate(-90deg);">Терминал</div>
<div style="position:absolute;left:90px;top:334px;width:1186px;height:1px;background:#000"></div>
<div style="position:absolute;left:18px;top:334px;width:73px;height:20px;background:#fff;border-left:1px solid #000;border-right:1px solid #000;border-bottom:1px solid #000;box-sizing:border-box"></div>
<div style="position:absolute;left:16px;top:334px;width:3px;height:1px;background:#000"></div>
<div class="t" style="left:28.00px;top:337.84px;font-size:12px;color:#000;font-family:'Liberation Sans',sans-serif;letter-spacing:0.270px;">Торговля</div>
<div class="t" style="left:99.50px;top:337.84px;font-size:12px;color:#5f5f5f;font-family:'Liberation Sans',sans-serif;letter-spacing:0.081px;">Активы</div>
<div class="t" style="left:161.00px;top:337.84px;font-size:12px;color:#5f5f5f;font-family:'Liberation Sans',sans-serif;letter-spacing:-0.163px;">История Счета</div>
<div class="t" style="left:262.70px;top:337.84px;font-size:12px;color:#5f5f5f;font-family:'Liberation Sans',sans-serif;letter-spacing:-0.026px;">Новости</div>
<div class="t" style="left:341.50px;top:337.84px;font-size:12px;color:#5f5f5f;font-family:'Liberation Sans',sans-serif;letter-spacing:-0.021px;">Алерты</div>
<div class="t" style="left:404.00px;top:337.84px;font-size:12px;color:#5f5f5f;font-family:'Liberation Sans',sans-serif;letter-spacing:0.172px;">Почта</div>
<div class="t" style="left:458.00px;top:337.84px;font-size:12px;color:#5f5f5f;font-family:'Liberation Sans',sans-serif;letter-spacing:0.069px;">Маркет</div>
<div class="t" style="left:531.00px;top:337.84px;font-size:12px;color:#5f5f5f;font-family:'Liberation Sans',sans-serif;letter-spacing:-0.112px;">Сигналы</div>
<div class="t" style="left:600.00px;top:337.84px;font-size:12px;color:#5f5f5f;font-family:'Liberation Sans',sans-serif;letter-spacing:-0.139px;">Библиотека</div>
<div class="t" style="left:685.00px;top:337.84px;font-size:12px;color:#5f5f5f;font-family:'Liberation Sans',sans-serif;letter-spacing:-0.246px;">Эксперты</div>
<div class="t" style="left:757.00px;top:337.84px;font-size:12px;color:#5f5f5f;font-family:'Liberation Sans',sans-serif;letter-spacing:0.047px;">Журнал</div>
<div class="t" style="left:311.00px;top:343.38px;font-size:9px;color:#e00000;font-family:'Liberation Sans',sans-serif;">99</div>
<div class="t" style="left:501.00px;top:343.38px;font-size:9px;color:#e00000;font-family:'Liberation Sans',sans-serif;">72</div>
<div style="position:absolute;left:151px;top:339px;width:1px;height:12px;background:#5f5f5f"></div>
<div style="position:absolute;left:253px;top:339px;width:1px;height:12px;background:#5f5f5f"></div>
<div style="position:absolute;left:332px;top:339px;width:1px;height:12px;background:#5f5f5f"></div>
<div style="position:absolute;left:394px;top:339px;width:1px;height:12px;background:#5f5f5f"></div>
<div style="position:absolute;left:448px;top:339px;width:1px;height:12px;background:#5f5f5f"></div>
<div style="position:absolute;left:521px;top:339px;width:1px;height:12px;background:#5f5f5f"></div>
<div style="position:absolute;left:590px;top:339px;width:1px;height:12px;background:#5f5f5f"></div>
<div style="position:absolute;left:675px;top:339px;width:1px;height:12px;background:#5f5f5f"></div>
<div style="position:absolute;left:747px;top:339px;width:1px;height:12px;background:#5f5f5f"></div>
<div style="position:absolute;left:812px;top:339px;width:1px;height:12px;background:#5f5f5f"></div>
<div style="position:absolute;left:0px;top:359px;width:1279px;height:1px;background:#a0a0a0"></div>
<div style="position:absolute;left:0px;top:360px;width:1279px;height:1px;background:#ffffff"></div>
<div style="position:absolute;left:15px;top:364px;width:1262px;height:223px;background:#fff"></div>
<div style="position:absolute;left:15px;top:364px;width:1262px;height:1px;background:#a0a0a0"></div>
<div style="position:absolute;left:15px;top:364px;width:1px;height:223px;background:#a0a0a0"></div>
<div style="position:absolute;left:1px;top:378px;width:14px;height:219px;background:linear-gradient(90deg,#c2d3e6,#d0dff0)"></div>
<div class="t" style="left:3.4px;top:607px;font-size:11px;letter-spacing:-0.39px;transform-origin:0 0;transform:rotate(-90deg);">Тестер</div>
<svg style="left:0;top:0" width="1279" height="597"><line x1="52.5" y1="370" x2="52.5" y2="569" stroke="#c4c4c4" stroke-dasharray="3,3" shape-rendering="crispEdges"/><line x1="84.5" y1="370" x2="84.5" y2="569" stroke="#c4c4c4" stroke-dasharray="3,3" shape-rendering="crispEdges"/><line x1="116.5" y1="370" x2="116.5" y2="569" stroke="#c4c4c4" stroke-dasharray="3,3" shape-rendering="crispEdges"/><line x1="148.5" y1="370" x2="148.5" y2="569" stroke="#c4c4c4" stroke-dasharray="3,3" shape-rendering="crispEdges"/><line x1="180.5" y1="370" x2="180.5" y2="569" stroke="#c4c4c4" stroke-dasharray="3,3" shape-rendering="crispEdges"/><line x1="212.5" y1="370" x2="212.5" y2="569" stroke="#c4c4c4" stroke-dasharray="3,3" shape-rendering="crispEdges"/><line x1="244.5" y1="370" x2="244.5" y2="569" stroke="#c4c4c4" stroke-dasharray="3,3" shape-rendering="crispEdges"/><line x1="276.5" y1="370" x2="276.5" y2="569" stroke="#c4c4c4" stroke-dasharray="3,3" shape-rendering="crispEdges"/><line x1="308.5" y1="370" x2="308.5" y2="569" stroke="#c4c4c4" stroke-dasharray="3,3" shape-rendering="crispEdges"/><line x1="340.5" y1="370" x2="340.5" y2="569" stroke="#c4c4c4" stroke-dasharray="3,3" shape-rendering="crispEdges"/><line x1="372.5" y1="370" x2="372.5" y2="569" stroke="#c4c4c4" stroke-dasharray="3,3" shape-rendering="crispEdges"/><line x1="404.5" y1="370" x2="404.5" y2="569" stroke="#c4c4c4" stroke-dasharray="3,3" shape-rendering="crispEdges"/><line x1="436.5" y1="370" x2="436.5" y2="569" stroke="#c4c4c4" stroke-dasharray="3,3" shape-rendering="crispEdges"/><line x1="468.5" y1="370" x2="468.5" y2="569" stroke="#c4c4c4" stroke-dasharray="3,3" shape-rendering="crispEdges"/><line x1="500.5" y1="370" x2="500.5" y2="569" stroke="#c4c4c4" stroke-dasharray="3,3" shape-rendering="crispEdges"/><line x1="532.5" y1="370" x2="532.5" y2="569" stroke="#c4c4c4" stroke-dasharray="3,3" shape-rendering="crispEdges"/><line x1="564.5" y1="370" x2="564.5" y2="569" stroke="#c4c4c4" stroke-dasharray="3,3" shape-rendering="crispEdges"/><line x1="596.5" y1="370" x2="596.5" y2="569" stroke="#c4c4c4" stroke-dasharray="3,3" shape-rendering="crispEdges"/><line x1="628.5" y1="370" x2="628.5" y2="569" stroke="#c4c4c4" stroke-dasharray="3,3" shape-rendering="crispEdges"/><line x1="660.5" y1="370" x2="660.5" y2="569" stroke="#c4c4c4" stroke-dasharray="3,3" shape-rendering="crispEdges"/><line x1="692.5" y1="370" x2="692.5" y2="569" stroke="#c4c4c4" stroke-dasharray="3,3" shape-rendering="crispEdges"/><line x1="724.5" y1="370" x2="724.5" y2="569" stroke="#c4c4c4" stroke-dasharray="3,3" shape-rendering="crispEdges"/><line x1="756.5" y1="370" x2="756.5" y2="569" stroke="#c4c4c4" stroke-dasharray="3,3" shape-rendering="crispEdges"/><line x1="788.5" y1="370" x2="788.5" y2="569" stroke="#c4c4c4" stroke-dasharray="3,3" shape-rendering="crispEdges"/><line x1="820.5" y1="370" x2="820.5" y2="569" stroke="#c4c4c4" stroke-dasharray="3,3" shape-rendering="crispEdges"/><line x1="852.5" y1="370" x2="852.5" y2="569" stroke="#c4c4c4" stroke-dasharray="3,3" shape-rendering="crispEdges"/><line x1="884.5" y1="370" x2="884.5" y2="569" stroke="#c4c4c4" stroke-dasharray="3,3" shape-rendering="crispEdges"/><line x1="916.5" y1="370" x2="916.5" y2="569" stroke="#c4c4c4" stroke-dasharray="3,3" shape-rendering="crispEdges"/><line x1="948.5" y1="370" x2="948.5" y2="569" stroke="#c4c4c4" stroke-dasharray="3,3" shape-rendering="crispEdges"/><line x1="980.5" y1="370" x2="980.5" y2="569" stroke="#c4c4c4" stroke-dasharray="3,3" shape-rendering="crispEdges"/><line x1="1012.5" y1="370" x2="1012.5" y2="569" stroke="#c4c4c4" stroke-dasharray="3,3" shape-rendering="crispEdges"/><line x1="1044.5" y1="370" x2="1044.5" y2="569" stroke="#c4c4c4" stroke-dasharray="3,3" shape-rendering="crispEdges"/><line x1="1076.5" y1="370" x2="1076.5" y2="569" stroke="#c4c4c4" stroke-dasharray="3,3" shape-rendering="crispEdges"/><line x1="1108.5" y1="370" x2="1108.5" y2="569" stroke="#c4c4c4" stroke-dasharray="3,3" shape-rendering="crispEdges"/><line x1="1140.5" y1="370" x2="1140.5" y2="569" stroke="#c4c4c4" stroke-dasharray="3,3" shape-rendering="crispEdges"/><line x1="1172.5" y1="370" x2="1172.5" y2="569" stroke="#c4c4c4" stroke-dasharray="3,3" shape-rendering="crispEdges"/><line x1="1204.5" y1="370" x2="1204.5" y2="569" stroke="#c4c4c4" stroke-dasharray="3,3" shape-rendering="crispEdges"/><line x1="21" y1="377.5" x2="1231" y2="377.5" stroke="#c4c4c4" stroke-dasharray="3,3" shape-rendering="crispEdges"/><line x1="21" y1="409.5" x2="1231" y2="409.5" stroke="#c4c4c4" stroke-dasharray="3,3" shape-rendering="crispEdges"/><line x1="21" y1="441.5" x2="1231" y2="441.5" stroke="#c4c4c4" stroke-dasharray="3,3" shape-rendering="crispEdges"/><line x1="21" y1="473.5" x2="1231" y2="473.5" stroke="#c4c4c4" stroke-dasharray="3,3" shape-rendering="crispEdges"/><line x1="21" y1="505.5" x2="1231" y2="505.5" stroke="#c4c4c4" stroke-dasharray="3,3" shape-rendering="crispEdges"/><line x1="21" y1="537.5" x2="1231" y2="537.5" stroke="#c4c4c4" stroke-dasharray="3,3" shape-rendering="crispEdges"/><rect x="20.5" y="369.5" width="1211" height="200.5" fill="none" stroke="#000" shape-rendering="crispEdges"/><line x1="1232" y1="377.5" x2="1233.6" y2="377.5" stroke="#000" shape-rendering="crispEdges"/><line x1="1232" y1="409.5" x2="1233.6" y2="409.5" stroke="#000" shape-rendering="crispEdges"/><line x1="1232" y1="441.5" x2="1233.6" y2="441.5" stroke="#000" shape-rendering="crispEdges"/><line x1="1232" y1="473.5" x2="1233.6" y2="473.5" stroke="#000" shape-rendering="crispEdges"/><line x1="1232" y1="505.5" x2="1233.6" y2="505.5" stroke="#000" shape-rendering="crispEdges"/><line x1="1232" y1="537.5" x2="1233.6" y2="537.5" stroke="#000" shape-rendering="crispEdges"/><line x1="1232" y1="569.5" x2="1233.6" y2="569.5" stroke="#000" shape-rendering="crispEdges"/><line x1="52.5" y1="570" x2="52.5" y2="572" stroke="#000" shape-rendering="crispEdges"/><line x1="84.5" y1="570" x2="84.5" y2="572" stroke="#000" shape-rendering="crispEdges"/><line x1="116.5" y1="570" x2="116.5" y2="572" stroke="#000" shape-rendering="crispEdges"/><line x1="148.5" y1="570" x2="148.5" y2="572" stroke="#000" shape-rendering="crispEdges"/><line x1="180.5" y1="570" x2="180.5" y2="572" stroke="#000" shape-rendering="crispEdges"/><line x1="212.5" y1="570" x2="212.5" y2="572" stroke="#000" shape-rendering="crispEdges"/><line x1="244.5" y1="570" x2="244.5" y2="572" stroke="#000" shape-rendering="crispEdges"/><line x1="276.5" y1="570" x2="276.5" y2="572" stroke="#000" shape-rendering="crispEdges"/><line x1="308.5" y1="570" x2="308.5" y2="572" stroke="#000" shape-rendering="crispEdges"/><line x1="340.5" y1="570" x2="340.5" y2="572" stroke="#000" shape-rendering="crispEdges"/><line x1="372.5" y1="570" x2="372.5" y2="572" stroke="#000" shape-rendering="crispEdges"/><line x1="404.5" y1="570" x2="404.5" y2="572" stroke="#000" shape-rendering="crispEdges"/><line x1="436.5" y1="570" x2="436.5" y2="572" stroke="#000" shape-rendering="crispEdges"/><line x1="468.5" y1="570" x2="468.5" y2="572" stroke="#000" shape-rendering="crispEdges"/><line x1="500.5" y1="570" x2="500.5" y2="572" stroke="#000" shape-rendering="crispEdges"/><line x1="532.5" y1="570" x2="532.5" y2="572" stroke="#000" shape-rendering="crispEdges"/><line x1="564.5" y1="570" x2="564.5" y2="572" stroke="#000" shape-rendering="crispEdges"/><line x1="596.5" y1="570" x2="596.5" y2="572" stroke="#000" shape-rendering="crispEdges"/><line x1="628.5" y1="570" x2="628.5" y2="572" stroke="#000" shape-rendering="crispEdges"/><line x1="660.5" y1="570" x2="660.5" y2="572" stroke="#000" shape-rendering="crispEdges"/><line x1="692.5" y1="570" x2="692.5" y2="572" stroke="#000" shape-rendering="crispEdges"/><line x1="724.5" y1="570" x2="724.5" y2="572" stroke="#000" shape-rendering="crispEdges"/><line x1="756.5" y1="570" x2="756.5" y2="572" stroke="#000" shape-rendering="crispEdges"/><line x1="788.5" y1="570" x2="788.5" y2="572" stroke="#000" shape-rendering="crispEdges"/><line x1="820.5" y1="570" x2="820.5" y2="572" stroke="#000" shape-rendering="crispEdges"/><line x1="852.5" y1="570" x2="852.5" y2="572" stroke="#000" shape-rendering="crispEdges"/><line x1="884.5" y1="570" x2="884.5" y2="572" stroke="#000" shape-rendering="crispEdges"/><line x1="916.5" y1="570" x2="916.5" y2="572" stroke="#000" shape-rendering="crispEdges"/><line x1="948.5" y1="570" x2="948.5" y2="572" stroke="#000" shape-rendering="crispEdges"/><line x1="980.5" y1="570" x2="980.5" y2="572" stroke="#000" shape-rendering="crispEdges"/><line x1="1012.5" y1="570" x2="1012.5" y2="572" stroke="#000" shape-rendering="crispEdges"/><line x1="1044.5" y1="570" x2="1044.5" y2="572" stroke="#000" shape-rendering="crispEdges"/><line x1="1076.5" y1="570" x2="1076.5" y2="572" stroke="#000" shape-rendering="crispEdges"/><line x1="1108.5" y1="570" x2="1108.5" y2="572" stroke="#000" shape-rendering="crispEdges"/><line x1="1140.5" y1="570" x2="1140.5" y2="572" stroke="#000" shape-rendering="crispEdges"/><line x1="1172.5" y1="570" x2="1172.5" y2="572" stroke="#000" shape-rendering="crispEdges"/><line x1="1204.5" y1="570" x2="1204.5" y2="572" stroke="#000" shape-rendering="crispEdges"/><polyline points="20.5,528.8 41.3,522.5 51.3,525 63.8,532.5 73.8,477.5 84.5,520 95.5,514.3 106,520 117.5,514 157.5,498.8 168.8,502 180,489.3 190,491.3 210,483 221,485.8 232.5,478.3 273.8,464.3 284.5,466.8 296.3,460 306,463 317.5,470 328.8,459.5 338.8,463.8 350,471.3 360,482.5 370,463.8 381.3,470.5 392.5,464.3 402.5,467.5 413.8,470 423.8,492.5 434.5,497.5 443.8,480.5 455,486.3 466.3,494.5 476.3,483.8 486.3,480 496.3,482 508,490 518.8,479.5 530,483.8 540,490 550,479.5 561.3,482.5 572.5,472.5 581.3,478.8 593.8,472 603.8,475 614.5,483 626.3,469 639.8,465.5 656.3,459.5 667,463 678,456.3 688.8,459.5 698.8,466.3 709.5,478.8 720.5,463.8 730,460 740,463.8 752,456.3 762.5,458.8 773.8,451.3 793.8,444.3 804.5,446.8 815,439.3 825.5,436.3 835.5,438.8 847.5,432 857.5,435 868.8,430 882.5,427.5 892.5,421.3 900,420 911.3,418.8 921.3,412 931.3,408 942,413 952.5,400.5 963.8,396.3 973.8,406.3 985,394.3 995.5,399.5 1006.3,389.5 1016.3,395.8 1027.5,403.8 1038.8,388.8 1048.8,393.8 1058.8,410 1070,416.3 1080.5,432 1091.3,413 1102.5,417.5 1113.8,425 1123.8,436.3 1135,453.8 1146.5,478 1156.6,500.2 1164.6,518.3 1166.6,518.3 1170.7,536.4 1176.3,558.5 1186.3,519.3 1196.8,524.7 1207.8,532.4 1218.9,544.4 1229,560.5" fill="none" stroke="#00c000" stroke-width="1.1"/><polyline points="20.5,528.8 41.3,522.5 51.3,525 63.8,532.5 73.8,523 84.5,526 95.5,519 106,521.8 117.5,514 157.5,498.8 168.8,502 180,493.8 210,483 221,485.8 232.5,478.3 273.8,464.3 284.5,466.8 296.3,460 306,463 317.5,470 328.8,459.5 338.8,463.8 350,471.3 360,482.5 370,468 381.3,470.5 392.5,464.3 402.5,467.5 413.8,473.8 423.8,487.5 434.5,502 443.8,483.8 455,486.3 466.3,494.5 476.3,483.8 486.3,480 496.3,482 508,490 518.8,479.5 530,483.8 540,490 550,479.5 561.3,482.5 572.5,476.3 581.3,478.8 593.8,472 603.8,475 614.5,483 626.3,470.5 639.8,465.5 656.3,459.5 667,463 678,456.3 688.8,459.5 698.8,466.3 709.5,478.8 720.5,463.8 730,460 740,463.8 752,456.3 762.5,458.8 773.8,451.3 793.8,444.3 804.5,446.8 815,439.3 825.5,436.3 835.5,438.8 847.5,432 857.5,435 868.8,427.5 900,416.3 911.3,418.8 921.3,412 931.3,408 942,411.3 952.5,402.5 963.8,400 973.8,403 985,395.5 995.5,399.5 1006.3,392 1016.3,395.8 1027.5,403.8 1038.8,393 1048.8,396.3 1058.8,403.8 1070,416.3 1080.5,432 1091.3,413 1102.5,417.5 1113.8,425 1123.8,436.3 1135,453.8 1146.5,478 1156.6,500.2 1164.6,518.3 1170.7,536.4 1176.3,555.5 1186.3,521.3 1196.8,524.7 1207.8,532.4 1218.9,544.4 1229,560.5" fill="none" stroke="#0000a0" stroke-width="2.1" stroke-linejoin="round"/></svg>
<div class="t" style="left:23.00px;top:374.38px;font-size:9px;color:#0000c0;font-family:'Liberation Sans',sans-serif;letter-spacing:0.075px;">Баланс</div>
<div class="t" style="left:57.00px;top:374.38px;font-size:9px;color:#000;font-family:'Liberation Sans',sans-serif;">/</div>
<div class="t" style="left:62.00px;top:374.38px;font-size:9px;color:#00a000;font-family:'Liberation Sans',sans-serif;letter-spacing:0.163px;">Средства</div>
<div class="t" style="left:1236.70px;top:374.04px;font-size:10px;color:#000;font-family:'Liberation Sans',sans-serif;transform-origin:0 0;transform:scaleX(0.8315);">1015</div>
<div class="t" style="left:1236.70px;top:406.04px;font-size:10px;color:#000;font-family:'Liberation Sans',sans-serif;transform-origin:0 0;transform:scaleX(0.8315);">1012</div>
<div class="t" style="left:1236.70px;top:438.04px;font-size:10px;color:#000;font-family:'Liberation Sans',sans-serif;transform-origin:0 0;transform:scaleX(0.8315);">1009</div>
<div class="t" style="left:1236.70px;top:470.04px;font-size:10px;color:#000;font-family:'Liberation Sans',sans-serif;transform-origin:0 0;transform:scaleX(0.8315);">1006</div>
<div class="t" style="left:1236.70px;top:502.04px;font-size:10px;color:#000;font-family:'Liberation Sans',sans-serif;transform-origin:0 0;transform:scaleX(0.8315);">1002</div>
<div class="t" style="left:1236.70px;top:534.03px;font-size:10px;color:#000;font-family:'Liberation Sans',sans-serif;transform-origin:0 0;transform:scaleX(0.8330);">999</div>
<div class="t" style="left:1236.70px;top:566.03px;font-size:10px;color:#000;font-family:'Liberation Sans',sans-serif;transform-origin:0 0;transform:scaleX(0.8330);">996</div>
<div class="t" style="left:21.00px;top:573.83px;font-size:10px;color:#000;font-family:'Liberation Sans',sans-serif;transform-origin:0 0;transform:scaleX(0.8090);">0</div>
<div class="t" style="left:46.44px;top:573.83px;font-size:10px;color:#000;font-family:'Liberation Sans',sans-serif;transform-origin:0 0;transform:scaleX(0.8200);">3</div>
<div class="t" style="left:78.44px;top:573.83px;font-size:10px;color:#000;font-family:'Liberation Sans',sans-serif;transform-origin:0 0;transform:scaleX(0.8200);">6</div>
<div class="t" style="left:110.44px;top:573.83px;font-size:10px;color:#000;font-family:'Liberation Sans',sans-serif;transform-origin:0 0;transform:scaleX(0.8200);">9</div>
<div class="t" style="left:137.88px;top:573.83px;font-size:10px;color:#000;font-family:'Liberation Sans',sans-serif;transform-origin:0 0;transform:scaleX(0.8200);">12</div>
<div class="t" style="left:169.88px;top:573.83px;font-size:10px;color:#000;font-family:'Liberation Sans',sans-serif;transform-origin:0 0;transform:scaleX(0.8200);">15</div>
<div class="t" style="left:201.88px;top:573.83px;font-size:10px;color:#000;font-family:'Liberation Sans',sans-serif;transform-origin:0 0;transform:scaleX(0.8200);">18</div>
<div class="t" style="left:233.88px;top:573.83px;font-size:10px;color:#000;font-family:'Liberation Sans',sans-serif;transform-origin:0 0;transform:scaleX(0.8200);">21</div>
<div class="t" style="left:265.88px;top:573.83px;font-size:10px;color:#000;font-family:'Liberation Sans',sans-serif;transform-origin:0 0;transform:scaleX(0.8200);">24</div>
<div class="t" style="left:297.88px;top:573.83px;font-size:10px;color:#000;font-family:'Liberation Sans',sans-serif;transform-origin:0 0;transform:scaleX(0.8200);">27</div>
<div class="t" style="left:329.88px;top:573.83px;font-size:10px;color:#000;font-family:'Liberation Sans',sans-serif;transform-origin:0 0;transform:scaleX(0.8200);">31</div>
<div class="t" style="left:361.88px;top:573.83px;font-size:10px;color:#000;font-family:'Liberation Sans',sans-serif;transform-origin:0 0;transform:scaleX(0.8200);">34</div>
<div class="t" style="left:393.88px;top:573.83px;font-size:10px;color:#000;font-family:'Liberation Sans',sans-serif;transform-origin:0 0;transform:scaleX(0.8200);">37</div>
<div class="t" style="left:425.88px;top:573.83px;font-size:10px;color:#000;font-family:'Liberation Sans',sans-serif;transform-origin:0 0;transform:scaleX(0.8200);">40</div>
<div class="t" style="left:457.88px;top:573.83px;font-size:10px;color:#000;font-family:'Liberation Sans',sans-serif;transform-origin:0 0;transform:scaleX(0.8200);">43</div>
<div class="t" style="left:489.88px;top:573.83px;font-size:10px;color:#000;font-family:'Liberation Sans',sans-serif;transform-origin:0 0;transform:scaleX(0.8200);">46</div>
<div class="t" style="left:521.88px;top:573.83px;font-size:10px;color:#000;font-family:'Liberation Sans',sans-serif;transform-origin:0 0;transform:scaleX(0.8200);">49</div>
<div class="t" style="left:553.88px;top:573.83px;font-size:10px;color:#000;font-family:'Liberation Sans',sans-serif;transform-origin:0 0;transform:scaleX(0.8200);">52</div>
<div class="t" style="left:585.88px;top:573.83px;font-size:10px;color:#000;font-family:'Liberation Sans',sans-serif;transform-origin:0 0;transform:scaleX(0.8200);">55</div>
<div class="t" style="left:617.88px;top:573.83px;font-size:10px;color:#000;font-family:'Liberation Sans',sans-serif;transform-origin:0 0;transform:scaleX(0.8200);">58</div>
<div class="t" style="left:649.88px;top:573.83px;font-size:10px;color:#000;font-family:'Liberation Sans',sans-serif;transform-origin:0 0;transform:scaleX(0.8200);">61</div>
<div class="t" style="left:681.88px;top:573.83px;font-size:10px;color:#000;font-family:'Liberation Sans',sans-serif;transform-origin:0 0;transform:scaleX(0.8200);">64</div>
<div class="t" style="left:713.88px;top:573.83px;font-size:10px;color:#000;font-family:'Liberation Sans',sans-serif;transform-origin:0 0;transform:scaleX(0.8200);">67</div>
<div class="t" style="left:745.88px;top:573.83px;font-size:10px;color:#000;font-family:'Liberation Sans',sans-serif;transform-origin:0 0;transform:scaleX(0.8200);">70</div>
<div class="t" style="left:777.88px;top:573.83px;font-size:10px;color:#000;font-family:'Liberation Sans',sans-serif;transform-origin:0 0;transform:scaleX(0.8200);">73</div>
<div class="t" style="left:809.88px;top:573.83px;font-size:10px;color:#000;font-family:'Liberation Sans',sans-serif;transform-origin:0 0;transform:scaleX(0.8200);">76</div>
<div class="t" style="left:841.88px;top:573.83px;font-size:10px;color:#000;font-family:'Liberation Sans',sans-serif;transform-origin:0 0;transform:scaleX(0.8200);">79</div>
<div class="t" style="left:873.88px;top:573.83px;font-size:10px;color:#000;font-family:'Liberation Sans',sans-serif;transform-origin:0 0;transform:scaleX(0.8200);">82</div>
<div class="t" style="left:905.88px;top:573.83px;font-size:10px;color:#000;font-family:'Liberation Sans',sans-serif;transform-origin:0 0;transform:scaleX(0.8200);">85</div>
<div class="t" style="left:937.88px;top:573.83px;font-size:10px;color:#000;font-family:'Liberation Sans',sans-serif;transform-origin:0 0;transform:scaleX(0.8200);">88</div>
<div class="t" style="left:969.88px;top:573.83px;font-size:10px;color:#000;font-family:'Liberation Sans',sans-serif;transform-origin:0 0;transform:scaleX(0.8200);">91</div>
<div class="t" style="left:1001.88px;top:573.83px;font-size:10px;color:#000;font-family:'Liberation Sans',sans-serif;transform-origin:0 0;transform:scaleX(0.8200);">94</div>
<div class="t" style="left:1033.88px;top:573.83px;font-size:10px;color:#000;font-family:'Liberation Sans',sans-serif;transform-origin:0 0;transform:scaleX(0.8200);">97</div>
<div class="t" style="left:1061.32px;top:573.83px;font-size:10px;color:#000;font-family:'Liberation Sans',sans-serif;transform-origin:0 0;transform:scaleX(0.8200);">100</div>
<div class="t" style="left:1093.32px;top:573.83px;font-size:10px;color:#000;font-family:'Liberation Sans',sans-serif;transform-origin:0 0;transform:scaleX(0.8200);">103</div>
<div class="t" style="left:1125.32px;top:573.83px;font-size:10px;color:#000;font-family:'Liberation Sans',sans-serif;transform-origin:0 0;transform:scaleX(0.8200);">106</div>
<div class="t" style="left:1157.32px;top:573.83px;font-size:10px;color:#000;font-family:'Liberation Sans',sans-serif;transform-origin:0 0;transform:scaleX(0.8200);">109</div>
<div class="t" style="left:1189.92px;top:573.83px;font-size:10px;color:#000;font-family:'Liberation Sans',sans-serif;transform-origin:0 0;transform:scaleX(0.8200);">112</div>
<div style="position:absolute;left:181px;top:587px;width:59px;height:10px;background:#fff"></div>
<div style="position:absolute;left:15px;top:587px;width:166px;height:10px;background:#f0f0f0;border-top:1px solid #000;border-right:1px solid #000;box-sizing:border-box"></div>
<div style="position:absolute;left:240px;top:587px;width:1037px;height:10px;background:#f0f0f0;border-top:1px solid #000;border-left:1px solid #000;box-sizing:border-box"></div>
<div class="t" style="left:28.00px;top:590.84px;font-size:12px;color:#5f5f5f;font-family:'Liberation Sans',sans-serif;letter-spacing:0.082px;">Настройки</div>
<div class="t" style="left:108.00px;top:590.84px;font-size:12px;color:#5f5f5f;font-family:'Liberation Sans',sans-serif;letter-spacing:-0.241px;">Результаты</div>
<div class="t" style="left:251.50px;top:590.84px;font-size:12px;color:#5f5f5f;font-family:'Liberation Sans',sans-serif;letter-spacing:-0.390px;">Отчет</div>
<div class="t" style="left:303.00px;top:590.84px;font-size:12px;color:#5f5f5f;font-family:'Liberation Sans',sans-serif;letter-spacing:-0.353px;">Журнал</div>
<div class="t" style="left:190.00px;top:590.84px;font-size:12px;color:#000;font-family:'Liberation Sans',sans-serif;letter-spacing:-0.260px;">График</div>
<div style="position:absolute;left:98px;top:592px;width:1px;height:5px;background:#5f5f5f"></div>
<div style="position:absolute;left:293px;top:592px;width:1px;height:5px;background:#5f5f5f"></div>
<div style="position:absolute;left:356px;top:592px;width:1px;height:5px;background:#5f5f5f"></div>
<div style="position:absolute;left:1276px;top:365px;width:1px;height:222px;background:#e4e4e4"></div>
<div style="position:absolute;left:1277px;top:364px;width:1px;height:233px;background:#ffffff"></div>
<div style="position:absolute;left:1277px;top:228px;width:1px;height:129px;background:#ffffff"></div>
<div style="position:absolute;left:15px;top:356px;width:1263px;height:1px;background:#ffffff"></div>
<div style="position:absolute;left:0px;top:361px;width:1279px;height:1px;background:#ffffff"></div>
<svg style="left:0;top:0" width="1279" height="597"><defs>
<linearGradient id="gplus" x1="0" y1="0" x2="0" y2="1"><stop offset="0" stop-color="#7dfa7d"/><stop offset="1" stop-color="#11c311"/></linearGradient>
<linearGradient id="gwin" x1="0" y1="0" x2="0" y2="1"><stop offset="0" stop-color="#bcd8f4"/><stop offset="0.3" stop-color="#ffffff"/></linearGradient>
<linearGradient id="ggold" x1="0" y1="0" x2="1" y2="1"><stop offset="0" stop-color="#fff09a"/><stop offset="1" stop-color="#e0b020"/></linearGradient>
<linearGradient id="gblue" x1="0" y1="0" x2="0" y2="1"><stop offset="0" stop-color="#8cc8f0"/><stop offset="1" stop-color="#3a90d0"/></linearGradient>
</defs><rect x="11.5" y="6.5" width="12" height="10" rx="1" fill="url(#gwin)" stroke="#3f82c8"/><path d="M14.5,9V14M13.5,10L14.5,9L15.5,10M13.5,13L14.5,14L15.5,13" stroke="#7f9fb8" fill="none"/><path d="M20.2,9.5H24.2V13.1H27.799999999999997V17.1H24.2V20.7H20.2V17.1H16.6V13.1H20.2Z" fill="url(#gplus)" stroke="#0a8a0a" stroke-width="1"/><path d="M32.8,13H38.3L35.55,16Z" fill="#000"/><rect x="51.5" y="11.5" width="13" height="10" rx="1" fill="#fff" stroke="#3f82c8"/><rect x="48.5" y="6.5" width="13" height="10" rx="1" fill="url(#gwin)" stroke="#3f82c8"/><path d="M51.5,8.5V13.5H59M57.5,12L59,13.5L57.5,15M54,18.5H62.5" stroke="#7f9fb8" fill="none"/><path d="M69.8,13H75.3L72.55,16Z" fill="#000"/><rect x="92.5" y="6.5" width="15" height="15" rx="1.5" fill="#fff" stroke="#5a9ee0" stroke-width="1.3"/><path d="M95,11H97.5V14H99.5V11H102L98.5,8Z" fill="#10a010"/><path d="M99,16H101.5V13.5H103.5V16H106L102.5,20Z" fill="#e85020"/><path d="M95,17H98M95,19H99M102,10H105M102,12H105" stroke="#ddd" stroke-width="0.8"/><circle cx="128.4" cy="14.1" r="5.4" fill="none" stroke="#555" stroke-width="1.2"/><path d="M128.4,6.8V21.5M121,14.1H135.8" stroke="#555" stroke-width="1.2"/><path d="M147.5,8.5H151L152.5,10H157.5V15.5H147.5Z" fill="url(#ggold)" stroke="#c09020"/><path d="M159,10.5L160.8,14.2L164.8,14.6L161.8,17.3L162.7,21.3L159,19.2L155.3,21.3L156.2,17.3L153.2,14.6L157.2,14.2Z" fill="#f8dc50" stroke="#b88a10"/><path d="M151.5,17V22" stroke="#222" stroke-dasharray="1,1.4"/><rect x="176.5" y="7" width="15.5" height="13.7" rx="1.5" fill="#fff" stroke="#3f82c8" stroke-width="1.3"/><rect x="177.5" y="8" width="3" height="12" fill="#9ac4ec"/><path d="M179,16V19.5" stroke="#444" stroke-width="1.3"/><path d="M182,9.5H191M182,11.5H191M182,13.5H191M182,15.5H191" stroke="#c8daf4" stroke-width="0.9"/><path d="M181,9.5h1.2M181,13.5h1.2" stroke="#e01010" stroke-width="1.2"/><path d="M178.5,9.5h1.2M181,11.5h1.2M181,15.5h1.2" stroke="#222" stroke-width="1.2"/><rect x="204.5" y="6.5" width="12.5" height="13" fill="#fff" stroke="#b8a890"/><path d="M207.5,9V17M213,9V15" stroke="#777"/><path d="M215.5,17.2L221.5,23" stroke="#c8a020" stroke-width="2.4"/><circle cx="212.4" cy="15" r="4.6" fill="#d8ecfa" fill-opacity="0.9" stroke="#5c9ee0" stroke-width="1.2"/><path d="M212,12V16" stroke="#8aa" stroke-width="2"/><path d="M239.5,6.5H248L250.5,9V19.5H239.5Z" fill="#fff" stroke="#777"/><path d="M241,9.5H243.5M241,12.5H247M241,14.5H245" stroke="#888" stroke-width="1"/><path d="M247.0,12.3H251.0V16.0H254.7V20.0H251.0V23.7H247.0V20.0H243.3V16.0H247.0Z" fill="url(#gplus)" stroke="#0a8a0a" stroke-width="1"/><path d="M349.8,7.5Q352,9 358.6,13.6L359.6,15.8L352,21.6L344.3,15.6Q347.5,12.5 349.8,7.5Z" fill="url(#ggold)" stroke="#a87018" stroke-width="1.1"/><path d="M345.5,15.8L352,20.5L358.5,15.5" stroke="#f6e6a0" fill="none" stroke-width="0.9"/><path d="M372,14L387,14L380,22Z" fill="#f4e070" stroke="#c8a020" stroke-width="0.8"/><ellipse cx="379.2" cy="10.8" rx="7.6" ry="3" fill="#68b8e8" stroke="#2f88c0"/><ellipse cx="378.6" cy="8.6" rx="3.6" ry="2.6" fill="#78c4f0" stroke="#2f88c0" stroke-width="0.8"/><circle cx="383.6" cy="17.6" r="3.9" fill="#e02010"/><rect x="382.1" y="16.1" width="3" height="3" fill="#fff"/><path d="M498.5,21.5V8.5M496.2,19.5H509.5" stroke="#555" stroke-width="1.1"/><path d="M496.9,9.9L498.5,7.9L500.1,9.9M508.1,17.9L510.1,19.5L508.1,21.1" stroke="#555" fill="none" stroke-width="1.1"/><path d="M504.5,9V17.5M502,16.5H504.5M504.5,10.5H507" stroke="#10a010" stroke-width="1.3" fill="none"/><path d="M526.5,21.5V8.5M524.2,19.5H537.5" stroke="#555" stroke-width="1.1"/><path d="M524.9,9.9L526.5,7.9L528.1,9.9M536.1,17.9L538.1,19.5L536.1,21.1" stroke="#555" fill="none" stroke-width="1.1"/><path d="M532.6,6V18" stroke="#10a010" stroke-width="1.2"/><rect x="530.5" y="8.5" width="4.3" height="7" fill="#60e060" stroke="#10a010"/><path d="M554.5,21.5V8.5M552.2,19.5H565.5" stroke="#555" stroke-width="1.1"/><path d="M552.9,9.9L554.5,7.9L556.1,9.9M564.1,17.9L566.1,19.5L564.1,21.1" stroke="#555" fill="none" stroke-width="1.1"/><path d="M553,16.5Q557,12 559.5,11Q561.5,11 564.5,15" stroke="#10a010" fill="none" stroke-width="1.1"/><path d="M593.4,15.3L599.3000000000001,21.2" stroke="#c89a18" stroke-width="3"/><circle cx="590.1" cy="11.9" r="5.3" fill="#e2f2fc" stroke="#3a88d0" stroke-width="1.2"/><path d="M587.3000000000001,11.9H592.9" stroke="#4a8ab8" stroke-width="1.8"/><path d="M590.1,9.1V14.7" stroke="#4a8ab8" stroke-width="1.8"/><path d="M621.4,15.3L627.3000000000001,21.2" stroke="#c89a18" stroke-width="3"/><circle cx="618.1" cy="11.9" r="5.3" fill="#e2f2fc" stroke="#3a88d0" stroke-width="1.2"/><path d="M615.3000000000001,11.9H620.9" stroke="#4a8ab8" stroke-width="1.8"/><rect x="640" y="6.2" width="7.8" height="7.6" rx="0.8" fill="#2aa02a"/><rect x="641.2" y="9.2" width="5.4" height="3.6" fill="#fff"/><rect x="648" y="6.2" width="7.8" height="7.6" rx="0.8" fill="#2050d0"/><rect x="649.2" y="9.2" width="5.4" height="3.6" fill="#fff"/><rect x="640" y="14" width="7.8" height="7.6" rx="0.8" fill="#2050d0"/><rect x="641.2" y="17" width="5.4" height="3.6" fill="#fff"/><rect x="648" y="14" width="7.8" height="7.6" rx="0.8" fill="#2aa02a"/><rect x="649.2" y="17" width="5.4" height="3.6" fill="#fff"/><path d="M678.5,21.5V8.5M676.2,19.5H689.5" stroke="#555" stroke-width="1.1"/><path d="M676.9,9.9L678.5,7.9L680.1,9.9M688.1,17.9L690.1,19.5L688.1,21.1" stroke="#555" fill="none" stroke-width="1.1"/><path d="M683,10.5V16L687,13.2Z" fill="#20b020"/><path d="M706.5,21.5V8.5M704.2,19.5H717.5" stroke="#555" stroke-width="1.1"/><path d="M704.9,9.9L706.5,7.9L708.1,9.9M716.1,17.9L718.1,19.5L716.1,21.1" stroke="#555" fill="none" stroke-width="1.1"/><path d="M712,9V17" stroke="#1a5ab0" stroke-width="1.3"/><path d="M713,13H718M715,11L713,13L715,15" stroke="#d03010" stroke-width="1.2" fill="none"/><path d="M737.5,6.5H745.5L748.5,9.5V18.5H737.5Z" fill="#fff" stroke="#777"/><path d="M740.5,9.5V15M739.5,10.5H741.5" stroke="#888"/><path d="M745.4,12.799999999999999H749.4V16.2H752.8V20.2H749.4V23.6H745.4V20.2H742.0V16.2H745.4Z" fill="url(#gplus)" stroke="#0a8a0a" stroke-width="1"/><path d="M756.6,13H762.1L759.35,16Z" fill="#000"/><circle cx="781" cy="14" r="7.4" fill="#1f6ac0"/><circle cx="781" cy="14" r="5.2" fill="#f6f8fa" stroke="#9cc4ec" stroke-width="0.8"/><path d="M781,9.5V14H784.5" stroke="#333" stroke-width="1" fill="none"/><path d="M793.6,13H799.1L796.35,16Z" fill="#000"/><rect x="810.5" y="7" width="16" height="14" rx="1" fill="#fff" stroke="#3f82c8" stroke-width="1.3"/><rect x="811" y="7.5" width="15" height="2.5" fill="#8cb8e8"/><path d="M812.5,14L815,12.5L818,13.3L821,12L825,12.5" stroke="#b03010" fill="none" stroke-width="0.9"/><path d="M812.5,18.5L815,17L818,18.3L821,16.5L825,17.5" stroke="#109010" fill="none" stroke-width="0.9"/><path d="M830.5,13H836.0L833.25,16Z" fill="#000"/><circle cx="1234.5" cy="11.2" r="3.8" fill="#fff" stroke="#1e5fd0" stroke-width="1.4"/><path d="M1232,14L1227.8,18.3" stroke="#1e5fd0" stroke-width="2.3" stroke-linecap="round"/><path d="M1262.5,14.5L1265.5,17L1264.8,14.6Z" fill="#666"/><ellipse cx="1267.2" cy="10.8" rx="6.6" ry="4.4" fill="#f4f4f8" stroke="#888" stroke-width="1.1"/><path d="M1255,17.5L1255.8,20.5L1258,18.2Z" fill="#666"/><ellipse cx="1258.2" cy="14.9" rx="5" ry="3.5" fill="#f4f4f8" stroke="#888" stroke-width="1.1"/><path d="M16.5,34V46.5L19.3,44L21.5,48.5L23.3,47.6L21.2,43.3L24.5,43Z" fill="#444"/><path d="M48.5,34V39.6M48.5,43.4V49M41,41.5H46.6M50.4,41.5H56" stroke="#555" stroke-width="1.2"/><path d="M82.5,35V48" stroke="#444" stroke-width="1.3"/><path d="M104.5,41.5H117.5" stroke="#444" stroke-width="1.3"/><path d="M132,48L145,36" stroke="#444" stroke-width="1.3"/><path d="M159,42.5L166.8,35M160.5,47.5L172.6,39" stroke="#444" stroke-width="1"/><path d="M161,46.5L163.5,40M164,44L166.5,37.5M167,42L169.5,35.5M170.5,39.5L171,33" stroke="#444" stroke-width="1.2"/><text x="169.8" y="50.2" font-family="Liberation Sans" font-weight="bold" font-size="7" fill="#444">E</text><path d="M188,34.4H202" stroke="#333" stroke-dasharray="1,1" stroke-width="1"/><path d="M188,37.5H202" stroke="#333" stroke-dasharray="1,1" stroke-width="1"/><path d="M188,41.5H202" stroke="#333" stroke-dasharray="1,1" stroke-width="1"/><path d="M188,45.5H198" stroke="#333" stroke-dasharray="1,1" stroke-width="1"/><text x="197.5" y="50.2" font-family="Liberation Sans" font-weight="bold" font-size="7" fill="#444">F</text><text x="218.6" y="46" font-family="Liberation Sans" font-weight="bold" font-size="12" fill="#555">A</text><rect x="245.5" y="35.5" width="11" height="12.5" fill="none" stroke="#444" stroke-dasharray="1,1.2"/><path d="M247,38.6H255M251,38.6V45.6" stroke="#555" stroke-width="1.6"/><path d="M272,38.5L276,34.8L280,38.5Z" fill="#444"/><path d="M274,41.5L276,44L281,39.5" stroke="#444" fill="none" stroke-width="1.2"/><path d="M279,44L286,44L282.5,47.8Z" fill="#444"/><path d="M290.8,40H296.3L293.55,43Z" fill="#000"/></svg>
<svg style="left:0;top:0" width="1279" height="597"><path d="M332.8,59.8L338.8,64.8M338.8,59.8L332.8,64.8" stroke="#000" stroke-width="1.7"/><path d="M332.8,128.8L338.8,133.8M338.8,128.8L332.8,133.8" stroke="#000" stroke-width="1.7"/><path d="M4,230.8L10,235.8M10,230.8L4,235.8" stroke="#000" stroke-width="1.7"/><path d="M4,366.8L10,371.8M10,366.8L4,371.8" stroke="#000" stroke-width="1.7"/><path d="M328.9,79.8L332.5,76.1L336.1,79.8" stroke="#555" stroke-width="1.8" fill="none"/><path d="M328.9,89.0L332.5,92.7L336.1,89.0" stroke="#555" stroke-width="1.8" fill="none"/><path d="M328.9,151L332.5,147.3L336.1,151" stroke="#555" stroke-width="1.8" fill="none"/><path d="M328.9,187.3L332.5,191.0L336.1,187.3" stroke="#555" stroke-width="1.8" fill="none"/><path d="M17.5,141V181M17.5,193V198M38.5,141V169.5M38.5,193V198M39,151.5H49M39,169.5H49M23,187.5H29" stroke="#777" stroke-dasharray="1,1" stroke-width="1" shape-rendering="crispEdges"/><rect x="13.5" y="183.5" width="8" height="8" rx="1" fill="#f4f4f4" stroke="#999"/><path d="M15.5,187.5H19.5" stroke="#3050c0"/><rect x="51.5" y="142.5" width="13" height="13" rx="2" fill="url(#ggold)" stroke="#c89a30"/><text x="54.5" y="152.7" font-family="Liberation Serif" font-style="italic" font-weight="bold" font-size="11" fill="#8a6a10">f</text><path d="M62.3,150.2L65,153.0L62.3,155.7L59.6,153.0Z" fill="#a0a0a0" stroke="#777" stroke-width="0.8"/><rect x="51.5" y="160.3" width="13" height="13" rx="2" fill="url(#ggold)" stroke="#c89a30"/><text x="54.5" y="170.5" font-family="Liberation Serif" font-style="italic" font-weight="bold" font-size="11" fill="#8a6a10">f</text><path d="M62.3,168L65,170.8L62.3,173.5L59.6,170.8Z" fill="#a0a0a0" stroke="#777" stroke-width="0.8"/><path d="M35,186L41,186L38,191Z" fill="#f0d860" stroke="#c0a020" stroke-width="0.8"/><path d="M40,188L43,185.5L46,188.5L43,191Z" fill="#f0d860" stroke="#c0a020" stroke-width="0.8"/><ellipse cx="38" cy="183.2" rx="7.6" ry="2.6" fill="#68b8e8" stroke="#2f88c0"/><ellipse cx="37.6" cy="181" rx="3.6" ry="2.6" fill="#78c4f0" stroke="#2f88c0" stroke-width="0.8"/><path d="M55,198Q58.5,195 62,198Z" fill="#3a9ad8"/></svg>
<div class="t" style="left:926.20px;top:543.07px;font-size:20px;color:rgba(150,150,150,0.45);font-family:'Liberation Sans',sans-serif;letter-spacing:-0.113px;">Активация Windows</div>
<div class="t" style="left:926.20px;top:568.50px;font-size:15px;color:rgba(150,150,150,0.45);font-family:'Liberation Sans',sans-serif;letter-spacing:0.028px;">Чтобы активировать Windows, перейдите к</div>
<div class="t" style="left:926.20px;top:586.50px;font-size:15px;color:rgba(150,150,150,0.45);font-family:'Liberation Sans',sans-serif;letter-spacing:0.148px;">параметрам компьютера</div>
</body></html>
